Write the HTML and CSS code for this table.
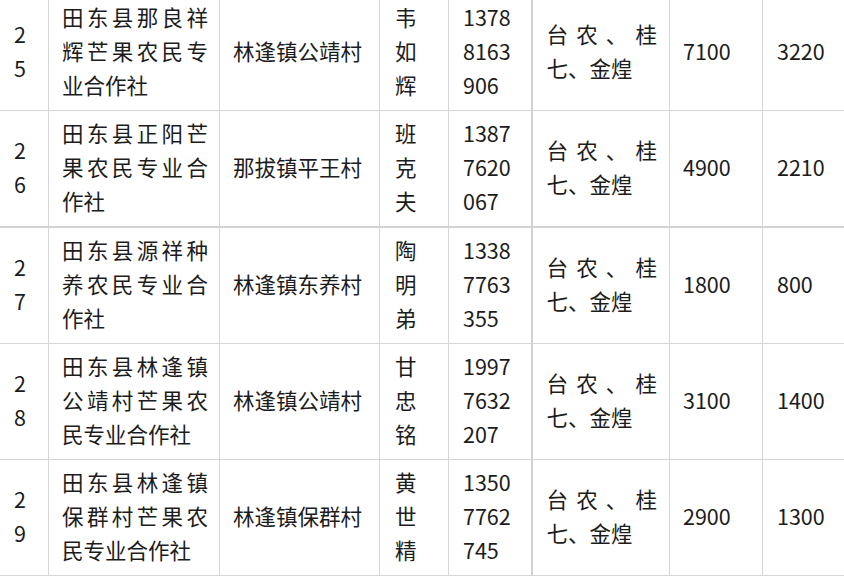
FILE: index.html
```html
<!DOCTYPE html>
<html lang="zh">
<head>
<meta charset="utf-8">
<title>芒果农民专业合作社</title>
<link rel="stylesheet" href="styles.css">
</head>
<body>
<table class="grid">
  <colgroup>
    <col class="c-no"><col class="c-name"><col class="c-addr"><col class="c-person"><col class="c-phone"><col class="c-var"><col class="c-area"><col class="c-yield">
  </colgroup>
  <tbody>
    <tr>
      <td class="no">25</td>
      <td class="name">田东县那良祥辉芒果农民专业合作社</td>
      <td class="addr">林逢镇公靖村</td>
      <td class="person">韦如辉</td>
      <td class="phone">13788163906</td>
      <td class="var">台农、桂七、金煌</td>
      <td class="num">7100</td>
      <td class="num last">3220</td>
    </tr>
    <tr>
      <td class="no">26</td>
      <td class="name">田东县正阳芒果农民专业合作社</td>
      <td class="addr">那拔镇平王村</td>
      <td class="person">班克夫</td>
      <td class="phone">13877620067</td>
      <td class="var">台农、桂七、金煌</td>
      <td class="num">4900</td>
      <td class="num last">2210</td>
    </tr>
    <tr class="thick">
      <td class="no">27</td>
      <td class="name">田东县源祥种养农民专业合作社</td>
      <td class="addr">林逢镇东养村</td>
      <td class="person">陶明弟</td>
      <td class="phone">13387763355</td>
      <td class="var">台农、桂七、金煌</td>
      <td class="num">1800</td>
      <td class="num last">800</td>
    </tr>
    <tr>
      <td class="no">28</td>
      <td class="name">田东县林逢镇公靖村芒果农民专业合作社</td>
      <td class="addr">林逢镇公靖村</td>
      <td class="person">甘忠铭</td>
      <td class="phone">19977632207</td>
      <td class="var">台农、桂七、金煌</td>
      <td class="num">3100</td>
      <td class="num last">1400</td>
    </tr>
    <tr>
      <td class="no">29</td>
      <td class="name">田东县林逢镇保群村芒果农民专业合作社</td>
      <td class="addr">林逢镇保群村</td>
      <td class="person">黄世精</td>
      <td class="phone">13507762745</td>
      <td class="var">台农、桂七、金煌</td>
      <td class="num">2900</td>
      <td class="num last">1300</td>
    </tr>
  </tbody>
</table>
</body>
</html>
```

FILE: styles.css
```css
html, body {
  margin: 0;
  padding: 0;
  overflow: hidden;
  background: #ffffff;
}

.grid {
  border-collapse: collapse;
  table-layout: fixed;
  width: 866px;
  margin: -6px 0 0 -1px;
  font-family: "Noto Sans CJK SC", "Noto Sans", sans-serif;
  font-size: 21.5px;
  line-height: 34px;
  color: #1c1c1c;
}

.c-no { width: 49px; }
.c-name { width: 171px; }
.c-addr { width: 160px; }
.c-person { width: 69px; }
.c-phone { width: 83px; }
.c-var { width: 138px; }
.c-area { width: 93px; }
.c-yield { width: 103px; }

.grid td {
  border: 1px solid #d6d6d6;
  height: 112px;
  padding: 0 12px 3px 13px;
  vertical-align: middle;
  text-align: left;
  word-break: break-all;
}

.grid tr.thick td {
  border-top: 2px solid #d2d2d2;
}

.grid td.no {
  padding-left: 14px;
  padding-right: 14px;
}

.grid td.name {
  padding-left: 13px;
  padding-right: 11px;
  text-align: justify;
  text-align-last: left;
}

.grid td.addr {
  padding-left: 13px;
  padding-right: 8px;
}

.grid td.person {
  padding-left: 15px;
  padding-right: 14px;
}

.grid td.phone {
  padding-left: 14px;
  padding-right: 14px;
}

.grid td.var {
  border-left: 2px solid #d2d2d2;
  padding-left: 14px;
  padding-right: 12px;
  text-align: justify;
  text-align-last: left;
}

.grid td.num {
  padding-left: 13px;
  padding-right: 8px;
}

.grid td.last {
  padding-left: 14px;
}
```
